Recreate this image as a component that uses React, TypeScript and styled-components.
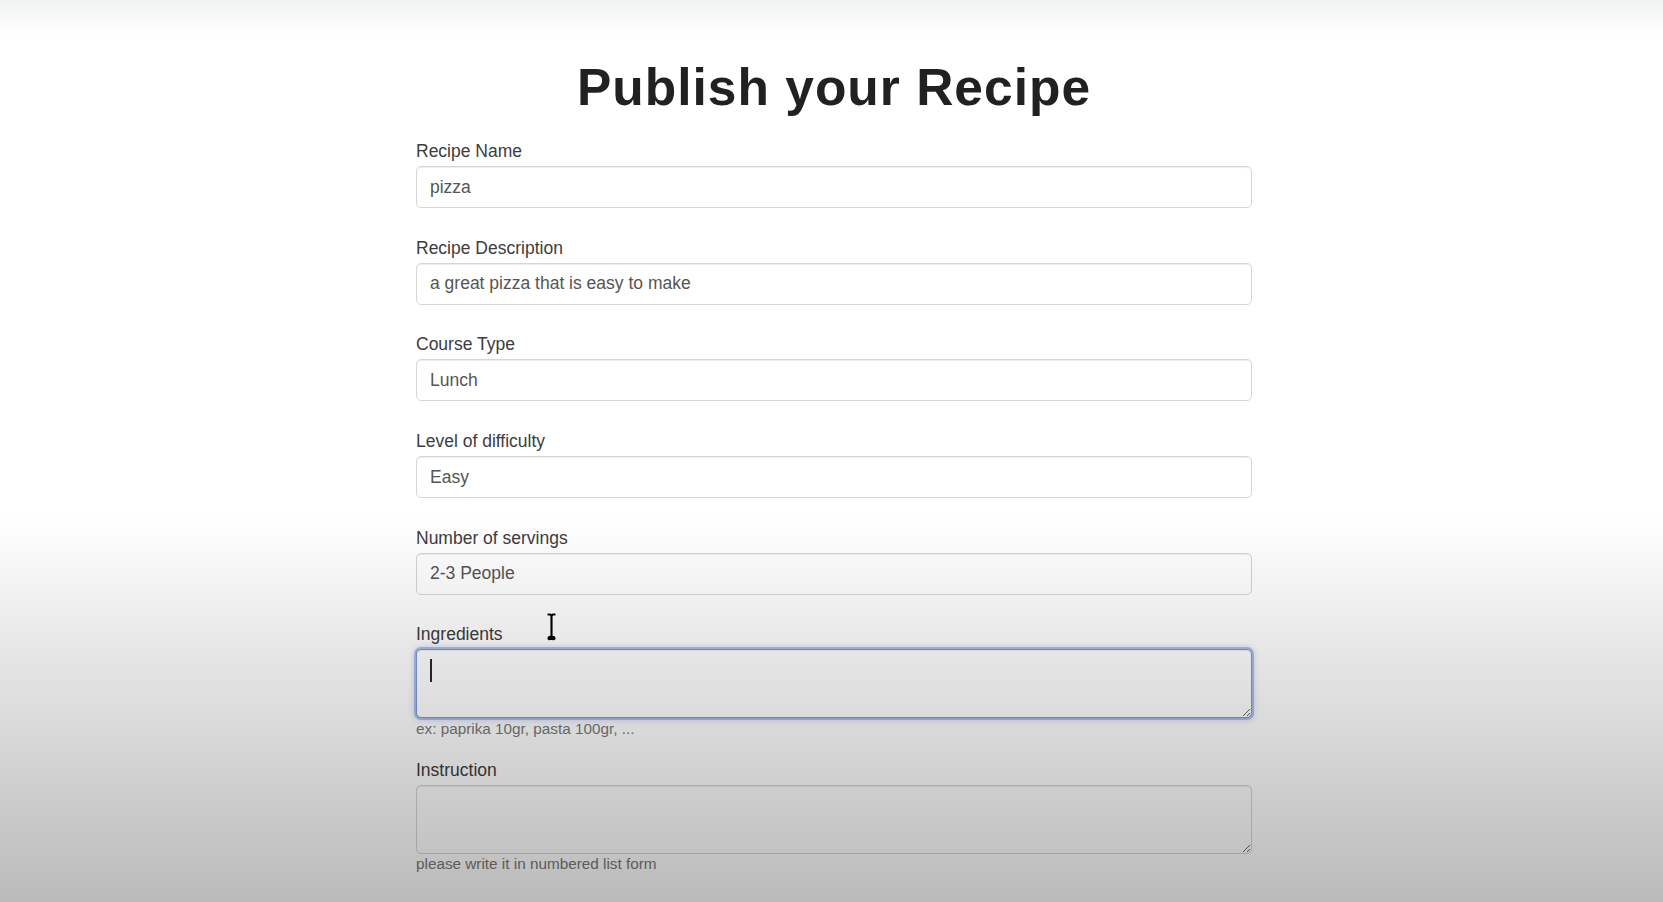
import React from "react";
import styled, { createGlobalStyle, css } from "styled-components";

const GlobalStyle = createGlobalStyle`
  html, body {
    margin: 0;
    padding: 0;
    background: #ffffff;
  }
  body {
    font-family: "Liberation Sans", Arial, Helvetica, sans-serif;
  }
  *, *::before, *::after {
    box-sizing: border-box;
  }
`;

const Page = styled.main`
  position: relative;
  height: 902px;
  overflow: hidden;
  padding: 60px 0 0 5px;
  background: #ffffff;
`;

const Shade = styled.div`
  position: fixed;
  inset: 0;
  pointer-events: none;
  z-index: 5;
  background:
    linear-gradient(to bottom, rgba(20, 40, 40, 0.06) 0px, rgba(20, 40, 40, 0) 36px),
    linear-gradient(
      to bottom,
      rgba(0, 0, 0, 0) 0px,
      rgba(0, 0, 0, 0) 515px,
      rgba(0, 0, 0, 0.13) 700px,
      rgba(0, 0, 0, 0.27) 902px
    );
`;

const Form = styled.form`
  width: 836px;
  margin: 0 auto;
`;

const Title = styled.h1`
  margin: 0 0 26px;
  font-size: 51.5px;
  line-height: 55px;
  font-weight: 700;
  letter-spacing: 1px;
  text-align: center;
  color: #1f2122;
`;

const Group = styled.div<{ $gap: number }>`
  position: relative;
  margin-bottom: ${(p) => p.$gap}px;
`;

const Label = styled.label`
  display: block;
  font-size: 17.5px;
  line-height: 20px;
  margin-bottom: 5px;
  color: #3d3d3d;
`;

const fieldBase = css`
  display: block;
  width: 100%;
  border: 1px solid #d6d6d6;
  border-radius: 5px;
  background: #ffffff;
  box-shadow: inset 0 1px 1px rgba(0, 0, 0, 0.075);
  font-family: "Liberation Sans", Arial, Helvetica, sans-serif;
  font-size: 17.5px;
  color: #555555;
  outline: none;
`;

const Input = styled.input`
  ${fieldBase};
  height: 42px;
  padding: 0 13px;
`;

const FieldWrap = styled.div`
  position: relative;
`;

const TextArea = styled.textarea<{ $focused?: boolean }>`
  ${fieldBase};
  height: 69px;
  padding: 10px 13px;
  resize: vertical;
  ${(p) =>
    p.$focused &&
    css`
      border-color: #7c9ad8;
      box-shadow: inset 0 1px 1px rgba(0, 0, 0, 0.075),
        0 0 0 2px rgba(140, 165, 228, 0.65), 0 0 6px 2px rgba(120, 150, 225, 0.35);
    `}
`;

const Caret = styled.span`
  position: absolute;
  left: 14px;
  top: 10px;
  width: 1.5px;
  height: 23px;
  background: #2a2a2a;
`;

const Help = styled.p`
  margin: 1.5px 0 0;
  font-size: 15.3px;
  line-height: 18px;
  color: #7a7a7a;
`;

const Pointer = styled.svg`
  position: absolute;
  left: 130px;
  top: -11px;
  z-index: 6;
`;

const IBeam = () => (
  <Pointer width="11" height="28" viewBox="0 0 11 28">
    <path
      d="M1.5 1.5 H4.3 L5.5 2.8 L6.7 1.5 H9.5 M5.5 2.8 V23.5 M2.5 25.5 C2.5 23.5 5.5 23.5 5.5 23.5 C5.5 23.5 8.5 23.5 8.5 25.5 C8.5 27 5.5 26 5.5 25 C5.5 26 2.5 27 2.5 25.5 Z"
      stroke="#ffffff"
      strokeWidth="3.2"
      fill="none"
      strokeLinejoin="round"
    />
    <path
      d="M1.5 1.5 H4.3 L5.5 2.8 L6.7 1.5 H9.5 M5.5 2.8 V23.5 M2.5 25.5 C2.5 23.5 5.5 23.5 5.5 23.5 C5.5 23.5 8.5 23.5 8.5 25.5 C8.5 27 5.5 26 5.5 25 C5.5 26 2.5 27 2.5 25.5 Z"
      stroke="#000000"
      strokeWidth="2.2"
      fill="none"
      strokeLinejoin="round"
    />
  </Pointer>
);

const fields = [
  { id: "name", label: "Recipe Name", value: "pizza" },
  { id: "desc", label: "Recipe Description", value: "a great pizza that is easy to make" },
  { id: "course", label: "Course Type", value: "Lunch" },
  { id: "level", label: "Level of difficulty", value: "Easy" },
  { id: "servings", label: "Number of servings", value: "2-3 People" },
];

export default function App() {
  return (
    <>
      <GlobalStyle />
      <Page>
        <Form onSubmit={(e) => e.preventDefault()}>
          <Title>Publish your Recipe</Title>
          {fields.map((f) => (
            <Group key={f.id} $gap={29.7}>
              <Label htmlFor={f.id}>{f.label}</Label>
              <Input id={f.id} type="text" defaultValue={f.value} readOnly />
            </Group>
          ))}
          <Group $gap={22}>
            <Label htmlFor="ingredients">Ingredients</Label>
            <IBeam />
            <FieldWrap>
              <TextArea id="ingredients" rows={2} $focused />
              <Caret />
            </FieldWrap>
            <Help>ex: paprika 10gr, pasta 100gr, ...</Help>
          </Group>
          <Group $gap={22}>
            <Label htmlFor="instruction">Instruction</Label>
            <FieldWrap>
              <TextArea id="instruction" rows={2} />
            </FieldWrap>
            <Help>please write it in numbered list form</Help>
          </Group>
        </Form>
        <Shade />
      </Page>
    </>
  );
}
